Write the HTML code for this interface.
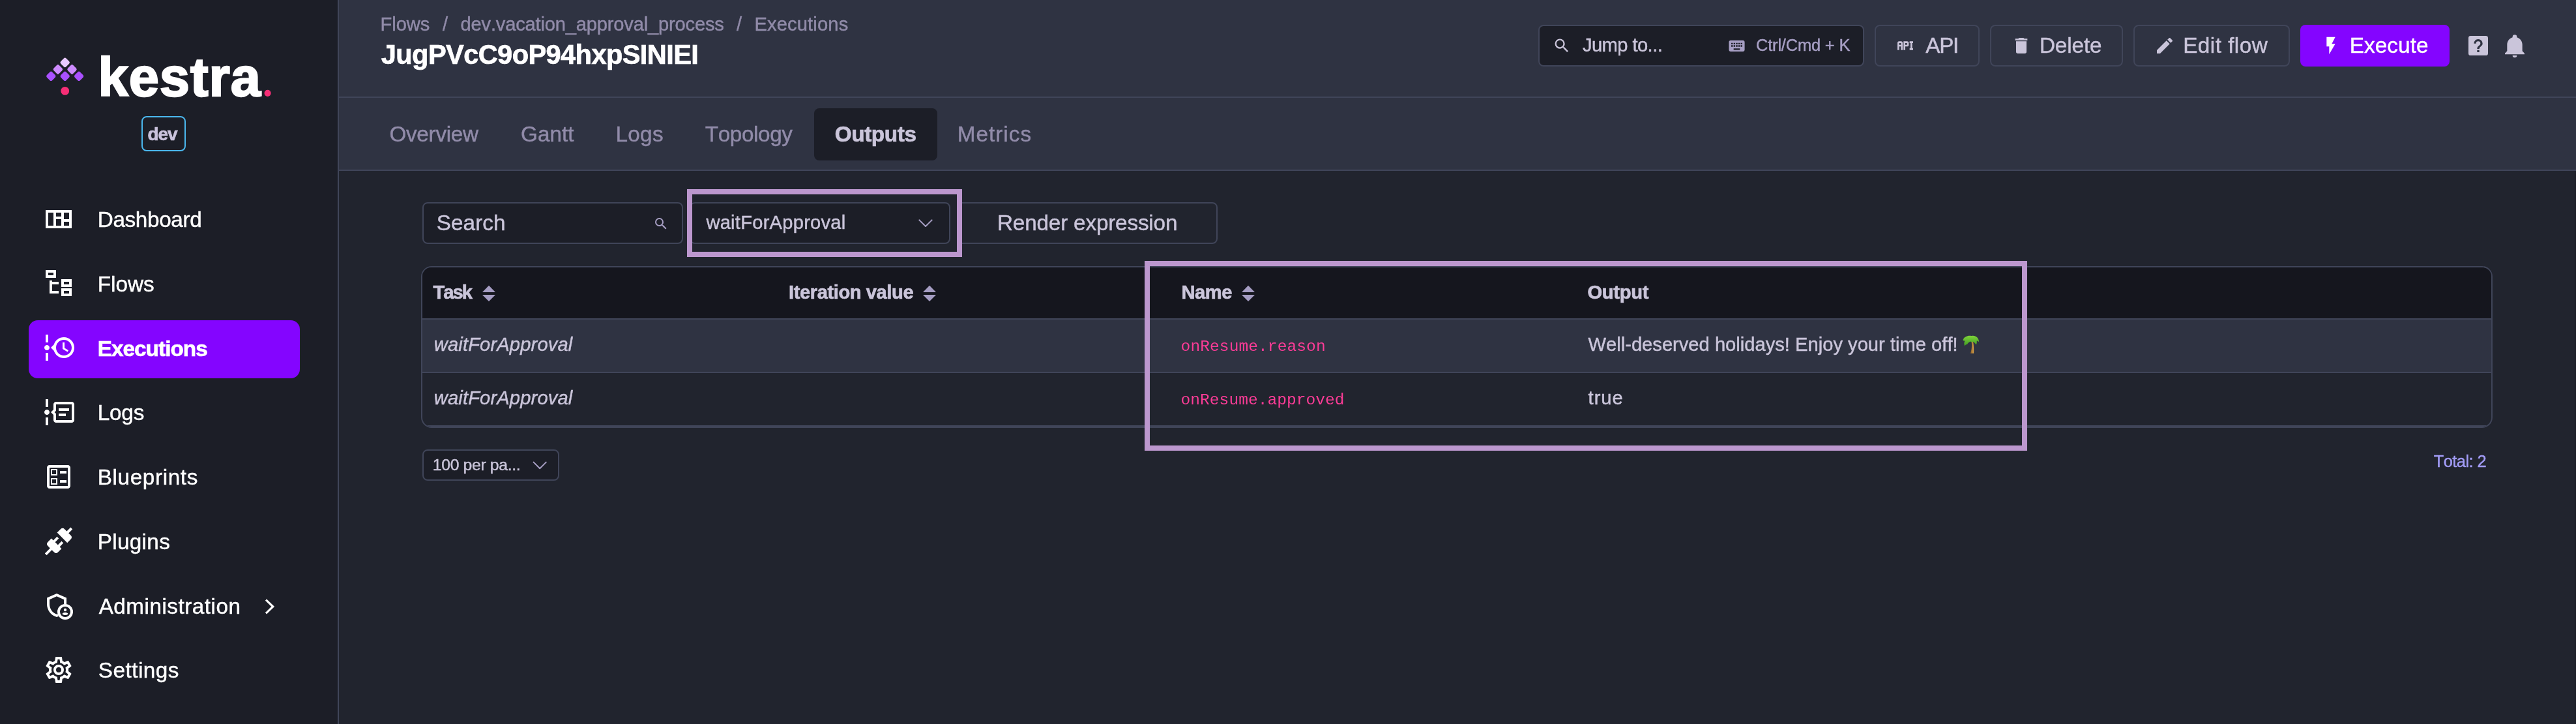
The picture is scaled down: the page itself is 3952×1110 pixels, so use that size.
<!DOCTYPE html>
<html lang="en">
<head>
<meta charset="utf-8">
<title>Executions - Outputs | Kestra</title>
<style>
html,body{margin:0;padding:0;background:#21242e;}
body{width:3952px;height:1110px;overflow:hidden;font-family:"Liberation Sans", sans-serif;}
#app{position:relative;width:3952px;height:1110px;overflow:hidden;background:#21242e;}
.b{position:absolute;box-sizing:border-box;}
.t{position:absolute;white-space:pre;line-height:1;font-kerning:none;}
.i{position:absolute;display:block;overflow:visible;}
.emo{opacity:0;letter-spacing:0;}
.m{font-family:"Liberation Mono", monospace;}
#txt{position:absolute;left:0;top:0;width:3952px;height:1110px;will-change:transform;}
.btn{border:2px solid #404559;border-radius:8px;}
.inp{border:2px solid #404559;border-radius:8px;background:#1c1e27;}

</style>
</head>
<body>
<div id="app">
<!-- sidebar -->
<div class="b" style="left:0px;top:0px;width:520px;height:1110px;background:#1c1e27;border-right:2px solid #404559;"></div>
<svg class="i" style="left:0;top:0" width="520" height="260" viewBox="0 0 520 260"><rect x="93.90" y="90.10" width="11.6" height="11.6" rx="2.6" fill="#e9c9ff" transform="rotate(45 99.7 95.9)"/><rect x="83.10" y="100.60" width="11.6" height="11.6" rx="2.6" fill="#cd8bff" transform="rotate(45 88.9 106.4)"/><rect x="104.70" y="100.60" width="11.6" height="11.6" rx="2.6" fill="#cd8bff" transform="rotate(45 110.5 106.4)"/><rect x="72.50" y="111.00" width="11.6" height="11.6" rx="2.6" fill="#a950ff" transform="rotate(45 78.3 116.8)"/><rect x="93.90" y="111.00" width="11.6" height="11.6" rx="2.6" fill="#a950ff" transform="rotate(45 99.7 116.8)"/><rect x="115.30" y="111.00" width="11.6" height="11.6" rx="2.6" fill="#a950ff" transform="rotate(45 121.1 116.8)"/><circle cx="99.7" cy="139.4" r="6.4" fill="#f62e76"/><circle cx="410.6" cy="142.8" r="5.1" fill="#f62e76"/></svg>
<div class="b" style="left:217px;top:178px;width:68px;height:54px;border:2px solid #4bb8ef;border-radius:8px;"></div>
<div class="b" style="left:44px;top:491px;width:416px;height:89px;background:#8405ff;border-radius:14px;"></div>
<svg class="i" style="left:66px;top:312px" width="48" height="48" viewBox="0 0 24 24"><path fill="#fff" d="M2 5V19H22V5H2M20 12H16V7H20V12M14 10H10V7H14V10M4 7H8V17H4V7M10 17V12H14V17H10M20 17H16V14H20V17Z"/></svg>
<svg class="i" style="left:66px;top:410px" width="48" height="48" viewBox="0 0 24 24"><path fill="#fff" d="M12 13H7V18H12V20H5V10H7V11H12V13M8 4V6H4V4H8M10 2H2V8H10V2M20 11V13H16V11H20M22 9H14V15H22V9M20 18V20H16V18H20M22 16H14V22H22V16Z"/></svg>
<svg class="i" style="left:66px;top:509.1px" width="48" height="48" viewBox="0 0 24 24"><path fill="#fff" d="M4 2V8H2V2H4M2 22H4V16H2V22M5 12C5 13.11 4.11 14 3 14C1.9 14 1 13.11 1 12C1 10.9 1.9 10 3 10C4.11 10 5 10.9 5 12M16 4C20.42 4 24 7.58 24 12C24 16.42 20.42 20 16 20C12.4 20 9.36 17.62 8.35 14.35L6 12L8.35 9.65C9.36 6.38 12.4 4 16 4M16 6C12.69 6 10 8.69 10 12C10 15.31 12.69 18 16 18C19.31 18 22 15.31 22 12C22 8.69 19.31 6 16 6M15 13V8H16.5V12.2L19.5 14L18.82 15.26L15 13Z"/></svg>
<svg class="i" style="left:66px;top:607.9px" width="48" height="48" viewBox="0 0 24 24"><path fill="#fff" d="M5 12C5 13.11 4.11 14 3 14S1 13.11 1 12 1.9 10 3 10 5 10.9 5 12M4 2V8H2V2H4M2 22V16H4V22H2M24 6V18C24 19.11 23.11 20 22 20H10C8.9 20 8 19.11 8 18V14L6 12L8 10V6C8 4.89 8.9 4 10 4H22C23.11 4 24 4.89 24 6M10 6V10.83L8.83 12L10 13.17V18H22V6H10M12 9H20V11H12V9M12 13H17.5V15H12V13Z"/></svg>
<svg class="i" style="left:66px;top:706.8px" width="48" height="48" viewBox="0 0 24 24"><path fill="#fff" d="M13 7.5H18V9.5H13V7.5M13 14.5H18V16.5H13V14.5M19 3C20.1 3 21 3.9 21 5V19C21 20.1 20.1 21 19 21H5C3.9 21 3 20.1 3 19V5C3 3.9 3.9 3 5 3H19M19 19V5H5V19H19M11 6V11H6V6H11M10 10V7H7V10H10M11 13V18H6V13H11M10 17V14H7V17H10Z"/></svg>
<svg class="i" style="left:66px;top:805.9px" width="48" height="48" viewBox="0 0 24 24"><path fill="#fff" d="M21.4 7.5C22.2 8.3 22.2 9.6 21.4 10.3L18.6 13.1L10.8 5.3L13.6 2.5C14.4 1.7 15.7 1.7 16.4 2.5L18.2 4.3L21.2 1.3L22.6 2.7L19.6 5.7L21.4 7.5M15.6 13.3L14.2 11.9L11.4 14.7L9.3 12.6L12.1 9.8L10.7 8.4L7.9 11.2L6.4 9.8L3.6 12.6C2.8 13.4 2.8 14.7 3.6 15.4L5.4 17.2L1.4 21.2L2.8 22.6L6.8 18.6L8.6 20.4C9.4 21.2 10.7 21.2 11.4 20.4L14.2 17.6L12.8 16.2L15.6 13.3Z"/></svg>
<svg class="i" style="left:66px;top:1003px" width="48" height="48" viewBox="0 0 24 24"><path fill="#fff" d="M12,8A4,4 0 0,1 16,12A4,4 0 0,1 12,16A4,4 0 0,1 8,12A4,4 0 0,1 12,8M12,10A2,2 0 0,0 10,12A2,2 0 0,0 12,14A2,2 0 0,0 14,12A2,2 0 0,0 12,10M10,22C9.75,22 9.54,21.82 9.5,21.58L9.13,18.93C8.5,18.68 7.96,18.34 7.44,17.94L4.95,18.95C4.73,19.03 4.46,18.95 4.34,18.73L2.34,15.27C2.21,15.05 2.27,14.78 2.46,14.63L4.57,12.97L4.5,12L4.57,11L2.46,9.37C2.27,9.22 2.21,8.95 2.34,8.73L4.34,5.27C4.46,5.05 4.73,4.96 4.95,5.05L7.44,6.05C7.96,5.66 8.5,5.32 9.13,5.07L9.5,2.42C9.54,2.18 9.75,2 10,2H14C14.25,2 14.46,2.18 14.5,2.42L14.87,5.07C15.5,5.32 16.04,5.66 16.56,6.05L19.05,5.05C19.27,4.96 19.54,5.05 19.66,5.27L21.66,8.73C21.79,8.95 21.73,9.22 21.54,9.37L19.43,11L19.5,12L19.43,13L21.54,14.63C21.73,14.78 21.79,15.05 21.66,15.27L19.66,18.73C19.54,18.95 19.27,19.04 19.05,18.95L16.56,17.95C16.04,18.34 15.5,18.68 14.87,18.93L14.5,21.58C14.46,21.82 14.25,22 14,22H10M11.25,4L10.88,6.61C9.68,6.86 8.62,7.5 7.85,8.39L5.44,7.35L4.69,8.65L6.8,10.2C6.4,11.37 6.4,12.64 6.8,13.8L4.68,15.36L5.43,16.66L7.86,15.62C8.63,16.5 9.68,17.14 10.87,17.38L11.24,20H12.76L13.13,17.39C14.32,17.14 15.37,16.5 16.14,15.62L18.57,16.66L19.32,15.36L17.2,13.81C17.6,12.64 17.6,11.37 17.2,10.2L19.31,8.65L18.56,7.35L16.15,8.39C15.38,7.5 14.32,6.86 13.12,6.62L12.75,4H11.25Z"/></svg>
<svg class="i" style="left:66px;top:904.1px" width="48" height="48" viewBox="0 0 24 24"><path fill="#fff" fill-rule="evenodd" d="M10.5 3L18 6.27V11.18C18 15.72 14.8 19.97 10.5 21C6.2 19.97 3 15.72 3 11.18V6.27ZM10.5 5.18L5 7.58V11.18C5 14.7 7.4 18.05 10.5 18.93C13.6 18.05 16 14.7 16 11.18V7.58Z"/><circle cx="17" cy="17" r="6" fill="#1c1e27"/><circle cx="17" cy="17" r="5" fill="none" stroke="#fff" stroke-width="2"/><circle cx="17" cy="15.5" r="1.1" fill="#fff"/><path fill="#fff" d="M14.7 18.6C14.9 17.9 16.2 17.5 17 17.5S19.1 17.9 19.3 18.6C18.8 19.2 17.9 19.5 17 19.5S15.2 19.2 14.7 18.6Z"/></svg>
<svg class="i" style="left:400px;top:910px" width="30" height="40" viewBox="400 910 30 40"><polyline points="408,919.6 418.8,930 408,940.4" fill="none" stroke="#fff" stroke-width="3.2" stroke-linejoin="miter"/></svg>
<!-- header -->
<div class="b" style="left:520px;top:0px;width:3432px;height:150px;background:#2f3342;border-bottom:2px solid #404559;"></div>
<div class="b" style="left:520px;top:150px;width:3432px;height:112px;background:#2f3342;border-bottom:2px solid #404559;"></div>
<div class="b" style="left:1249px;top:166px;width:189px;height:80px;background:#1c1e27;border-radius:8px;"></div>
<div class="b inp" style="left:2360px;top:38px;width:500px;height:64px;"></div>
<svg class="i" style="left:2382.2px;top:56.3px" width="28" height="28" viewBox="0 0 24 24"><path fill="#cac5da" d="M9.5,3A6.5,6.5 0 0,1 16,9.5C16,11.11 15.41,12.59 14.44,13.73L14.71,14H15.5L20.5,19L19,20.5L14,15.5V14.71L13.73,14.44C12.59,15.41 11.11,16 9.5,16A6.5,6.5 0 0,1 3,9.5A6.5,6.5 0 0,1 9.5,3M9.5,5C7,5 5,7 5,9.5C5,12 7,14 9.5,14C12,14 14,12 14,9.5C14,7 12,5 9.5,5Z"/></svg>
<svg class="i" style="left:2650.4px;top:55.6px" width="29" height="29" viewBox="0 0 24 24"><path fill="#a79fc4" d="M19,10H17V8H19M19,13H17V11H19M16,10H14V8H16M16,13H14V11H16M16,17H8V15H16M7,10H5V8H7M7,13H5V11H7M8,11H10V13H8M8,8H10V10H8M11,11H13V13H11M11,8H13V10H11M20,5H4C2.89,5 2,5.89 2,7V17A2,2 0 0,0 4,19H20A2,2 0 0,0 22,17V7C22,5.89 21.1,5 20,5Z"/></svg>
<div class="b btn" style="left:2876px;top:38px;width:161px;height:64px;"></div>
<svg class="i" style="left:2907.4px;top:54.2px" width="32" height="32" viewBox="0 0 24 24"><path fill="#cac5da" d="M7 7H5A2 2 0 0 0 3 9V17H5V13H7V17H9V9A2 2 0 0 0 7 7M7 11H5V9H7M14 7H10V17H12V13H14A2 2 0 0 0 16 11V9A2 2 0 0 0 14 7M14 11H12V9H14M20 9V15H21V17H17V15H18V9H17V7H21V9Z"/></svg>
<div class="b btn" style="left:3053px;top:38px;width:204px;height:64px;"></div>
<svg class="i" style="left:3085px;top:54.2px" width="32" height="32" viewBox="0 0 24 24"><path fill="#cac5da" d="M19,4H15.5L14.5,3H9.5L8.5,4H5V6H19M6,19A2,2 0 0,0 8,21H16A2,2 0 0,0 18,19V7H6V19Z"/></svg>
<div class="b btn" style="left:3273px;top:38px;width:240px;height:64px;"></div>
<svg class="i" style="left:3304.9px;top:53.9px" width="32" height="32" viewBox="0 0 24 24"><path fill="#cac5da" d="M20.71,7.04C21.1,6.65 21.1,6 20.71,5.63L18.37,3.29C18,2.9 17.35,2.9 16.96,3.29L15.12,5.12L18.87,8.87M3,17.25V21H6.75L17.81,9.93L14.06,6.18L3,17.25Z"/></svg>
<div class="b" style="left:3529px;top:38px;width:229px;height:64px;background:#8405ff;border-radius:8px;"></div>
<svg class="i" style="left:3560.4px;top:54.2px" width="32" height="32" viewBox="0 0 24 24"><path fill="#fff" d="M7,2V13H10V22L17,10H13L17,2H7Z"/></svg>
<svg class="i" style="left:3782px;top:49.8px" width="40" height="40" viewBox="0 0 24 24"><path fill="#cac5da" d="M11,18H13V16H11V18M12,6A4,4 0 0,0 8,10H10A2,2 0 0,1 12,8A2,2 0 0,1 14,10C14,12 11,11.75 11,15H13C13,12.75 16,12.5 16,10A4,4 0 0,0 12,6M5,3H19A2,2 0 0,1 21,5V19A2,2 0 0,1 19,21H5A2,2 0 0,1 3,19V5A2,2 0 0,1 5,3Z"/></svg>
<svg class="i" style="left:3838px;top:49.5px" width="40" height="40" viewBox="0 0 24 24"><path fill="#cac5da" d="M21,19V20H3V19L5,17V11C5,7.9 7.03,5.17 10,4.29C10,4.19 10,4.1 10,4A2,2 0 0,1 12,2A2,2 0 0,1 14,4C14,4.1 14,4.19 14,4.29C16.97,5.17 19,7.9 19,11V17L21,19M14,21A2,2 0 0,1 12,23A2,2 0 0,1 10,21"/></svg>
<!-- content -->
<div class="b inp" style="left:648px;top:310px;width:400px;height:64px;"></div>
<svg class="i" style="left:1002px;top:330.5px" width="24" height="24" viewBox="0 0 24 24"><path fill="#a79fc4" d="M9.5,3A6.5,6.5 0 0,1 16,9.5C16,11.11 15.41,12.59 14.44,13.73L14.71,14H15.5L20.5,19L19,20.5L14,15.5V14.71L13.73,14.44C12.59,15.41 11.11,16 9.5,16A6.5,6.5 0 0,1 3,9.5A6.5,6.5 0 0,1 9.5,3M9.5,5C7,5 5,7 5,9.5C5,12 7,14 9.5,14C12,14 14,12 14,9.5C14,7 12,5 9.5,5Z"/></svg>
<div class="b inp" style="left:1058px;top:310px;width:400px;height:64px;"></div>
<svg class="i" style="left:1400px;top:330px" width="40" height="26" viewBox="1400 330 40 26"><polyline points="1410.3,337.4 1420,347.0 1429.7,337.4" fill="none" stroke="#a79fc4" stroke-width="2" stroke-linecap="round" stroke-linejoin="round"/></svg>
<div class="b btn" style="left:1468px;top:310px;width:400px;height:64px;"></div>
<div class="b" style="left:646px;top:408px;width:3178px;height:248px;border:2px solid #404559;border-radius:16px;overflow:hidden;background:#21242e;"><div class="b" style="left:0;top:0;width:3174px;height:78px;background:#15161e"></div><div class="b" style="left:0;top:78px;width:3174px;height:2px;background:#404559"></div><div class="b" style="left:0;top:80px;width:3174px;height:80px;background:#2f3342"></div><div class="b" style="left:0;top:160px;width:3174px;height:2px;background:#404559"></div><div class="b" style="left:0;top:242px;width:3174px;height:2px;background:#404559"></div></div>
<svg class="i" style="left:738px;top:436px" width="24" height="28" viewBox="0 0 24 28"><path fill="#a59dc3" d="M12 1.7L22 12H2ZM12 26L2 16.1H22Z"/></svg>
<svg class="i" style="left:1414px;top:436px" width="24" height="28" viewBox="0 0 24 28"><path fill="#a59dc3" d="M12 1.7L22 12H2ZM12 26L2 16.1H22Z"/></svg>
<svg class="i" style="left:1903.2px;top:436px" width="24" height="28" viewBox="0 0 24 28"><path fill="#a59dc3" d="M12 1.7L22 12H2ZM12 26L2 16.1H22Z"/></svg>
<div class="b inp" style="left:648px;top:689px;width:210px;height:48px;"></div>
<svg class="i" style="left:810px;top:700px" width="36" height="26" viewBox="810 700 36 26"><polyline points="818.6,708.6 828.2,718.2 837.8,708.6" fill="none" stroke="#a79fc4" stroke-width="2" stroke-linecap="round" stroke-linejoin="round"/></svg>
<div class="b" style="left:3950px;top:262px;width:2px;height:848px;background:#1c1e27;"></div>
<!-- text -->
<div id="txt">
<span class="t" style="left:150.6px;top:76.6px;font-size:83.0px;color:#ffffff;letter-spacing:0.956px;font-weight:700;-webkit-text-stroke:0.7px;-webkit-text-stroke:2.4px #fff">kestra</span>
<span class="t" style="left:226.6px;top:191.8px;font-size:28.0px;color:#c9c2dc;letter-spacing:-1.138px;font-weight:700;-webkit-text-stroke:0.7px">dev</span>
<span class="t" style="left:149.7px;top:320.06px;font-size:33.28px;color:#ffffff;letter-spacing:-0.33px;-webkit-text-stroke:0.45px">Dashboard</span>
<span class="t" style="left:149.7px;top:418.81px;font-size:33.28px;color:#ffffff;letter-spacing:0.016px;-webkit-text-stroke:0.45px">Flows</span>
<span class="t" style="left:149.7px;top:517.56px;font-size:33.28px;color:#ffffff;letter-spacing:-0.941px;font-weight:700;-webkit-text-stroke:0.7px">Executions</span>
<span class="t" style="left:149.7px;top:616.31px;font-size:33.28px;color:#ffffff;letter-spacing:-0.167px;-webkit-text-stroke:0.45px">Logs</span>
<span class="t" style="left:149.7px;top:715.06px;font-size:33.28px;color:#ffffff;letter-spacing:0.634px;-webkit-text-stroke:0.45px">Blueprints</span>
<span class="t" style="left:149.7px;top:813.81px;font-size:33.28px;color:#ffffff;letter-spacing:0.338px;-webkit-text-stroke:0.45px">Plugins</span>
<span class="t" style="left:151.7px;top:912.56px;font-size:33.28px;color:#ffffff;letter-spacing:0.495px;-webkit-text-stroke:0.45px">Administration</span>
<span class="t" style="left:150.7px;top:1011.31px;font-size:33.28px;color:#ffffff;letter-spacing:0.505px;-webkit-text-stroke:0.45px">Settings</span>
<span class="t" style="left:583.5px;top:23.44px;font-size:29.12px;color:#918ba9;letter-spacing:-0.04px;-webkit-text-stroke:0.45px">Flows</span>
<span class="t" style="left:678.9px;top:23.44px;font-size:29.12px;color:#918ba9;letter-spacing:0px;-webkit-text-stroke:0.45px">/</span>
<span class="t" style="left:706.5px;top:23.44px;font-size:29.12px;color:#918ba9;letter-spacing:-0.18px;-webkit-text-stroke:0.45px">dev.vacation_approval_process</span>
<span class="t" style="left:1129.9px;top:23.44px;font-size:29.12px;color:#918ba9;letter-spacing:0px;-webkit-text-stroke:0.45px">/</span>
<span class="t" style="left:1157.4px;top:23.44px;font-size:29.12px;color:#918ba9;letter-spacing:0.163px;-webkit-text-stroke:0.45px">Executions</span>
<span class="t" style="left:584.8px;top:63.0px;font-size:41.6px;color:#ffffff;letter-spacing:-0.612px;font-weight:700;-webkit-text-stroke:0.7px">JugPVcC9oP94hxpSINIEI</span>
<span class="t" style="left:597.4px;top:188.76px;font-size:33.28px;color:#918ba9;letter-spacing:-0.273px;-webkit-text-stroke:0.45px">Overview</span>
<span class="t" style="left:799.0px;top:188.76px;font-size:33.28px;color:#918ba9;letter-spacing:0.045px;-webkit-text-stroke:0.45px">Gantt</span>
<span class="t" style="left:944.5px;top:188.76px;font-size:33.28px;color:#918ba9;letter-spacing:0.299px;-webkit-text-stroke:0.45px">Logs</span>
<span class="t" style="left:1081.8px;top:188.76px;font-size:33.28px;color:#918ba9;letter-spacing:-0.388px;-webkit-text-stroke:0.45px">Topology</span>
<span class="t" style="left:1280.7px;top:188.76px;font-size:33.28px;color:#cac5da;letter-spacing:-0.365px;font-weight:700;-webkit-text-stroke:0.7px">Outputs</span>
<span class="t" style="left:1468.8px;top:188.76px;font-size:33.28px;color:#918ba9;letter-spacing:1.008px;-webkit-text-stroke:0.45px">Metrics</span>
<span class="t" style="left:2427.9px;top:55.34px;font-size:29.12px;color:#cac5da;letter-spacing:-0.547px;-webkit-text-stroke:0.45px">Jump to...</span>
<span class="t" style="left:2694.0px;top:57.16px;font-size:25.48px;color:#a79fc4;letter-spacing:-0.189px;-webkit-text-stroke:0.45px">Ctrl/Cmd + K</span>
<span class="t" style="left:2954.3px;top:52.76px;font-size:33.28px;color:#cac5da;letter-spacing:-1.338px;-webkit-text-stroke:0.45px">API</span>
<span class="t" style="left:3128.9px;top:52.76px;font-size:33.28px;color:#cac5da;letter-spacing:-0.092px;-webkit-text-stroke:0.45px">Delete</span>
<span class="t" style="left:3349.2px;top:52.76px;font-size:33.28px;color:#cac5da;letter-spacing:0.475px;-webkit-text-stroke:0.45px">Edit flow</span>
<span class="t" style="left:3604.7px;top:52.76px;font-size:33.28px;color:#ffffff;letter-spacing:0.1px;-webkit-text-stroke:0.45px">Execute</span>
<span class="t" style="left:669.8px;top:325.16px;font-size:33.28px;color:#cac5da;letter-spacing:0.06px;-webkit-text-stroke:0.45px">Search</span>
<span class="t" style="left:1083.4px;top:327.34px;font-size:29.12px;color:#cac5da;letter-spacing:0.254px;-webkit-text-stroke:0.45px">waitForApproval</span>
<span class="t" style="left:1530.0px;top:324.96px;font-size:33.28px;color:#cac5da;letter-spacing:-0.176px;-webkit-text-stroke:0.45px">Render expression</span>
<span class="t" style="left:664.5px;top:434.44px;font-size:29.12px;color:#cac5da;letter-spacing:-1.987px;font-weight:700;-webkit-text-stroke:0.7px">Task</span>
<span class="t" style="left:1210.0px;top:434.44px;font-size:29.12px;color:#cac5da;letter-spacing:-0.412px;font-weight:700;-webkit-text-stroke:0.7px">Iteration value</span>
<span class="t" style="left:1812.5px;top:434.44px;font-size:29.12px;color:#cac5da;letter-spacing:-0.465px;font-weight:700;-webkit-text-stroke:0.7px">Name</span>
<span class="t" style="left:2435.5px;top:434.44px;font-size:29.12px;color:#cac5da;letter-spacing:-0.296px;font-weight:700;-webkit-text-stroke:0.7px">Output</span>
<span class="t" style="left:665.8px;top:514.34px;font-size:29.12px;color:#cac5da;letter-spacing:0.154px;-webkit-text-stroke:0.45px;font-style:italic">waitForApproval</span>
<span class="t" style="left:665.8px;top:596.34px;font-size:29.12px;color:#cac5da;letter-spacing:0.154px;-webkit-text-stroke:0.45px;font-style:italic">waitForApproval</span>
<span class="t m" style="left:1811.6px;top:520.15px;font-size:24.5px;color:#fd3c97;letter-spacing:0.105px">onResume.reason</span>
<span class="t m" style="left:1811.6px;top:602.15px;font-size:24.5px;color:#fd3c97;letter-spacing:0.054px">onResume.approved</span>
<span class="t" style="left:2436.5px;top:514.34px;font-size:29.12px;color:#cac5da;letter-spacing:0.019px;-webkit-text-stroke:0.45px">Well-deserved holidays! Enjoy your time off!<span class="emo"> 🌴</span></span>
<span class="t" style="left:2436.5px;top:596.34px;font-size:29.12px;color:#cac5da;letter-spacing:1.043px;-webkit-text-stroke:0.45px">true</span>
<span class="t" style="left:663.8px;top:701.02px;font-size:24.75px;color:#cac5da;letter-spacing:-0.35px;-webkit-text-stroke:0.45px">100 per pa...</span>
<span class="t" style="left:3733.7px;top:695.36px;font-size:25.48px;color:#a29cf6;letter-spacing:-0.553px;-webkit-text-stroke:0.45px">Total: 2</span>
</div>
<svg class="i" style="left:3010px;top:512px" width="30" height="32" viewBox="0 0 30 32"><defs><linearGradient id="pg" x1="0" y1="0" x2="0" y2="1"><stop offset="0" stop-color="#7fd43a"/><stop offset="1" stop-color="#3f9a22"/></linearGradient><linearGradient id="pt" x1="0" y1="0" x2="1" y2="0"><stop offset="0" stop-color="#8a5a22"/><stop offset="1" stop-color="#d6a24c"/></linearGradient></defs><path d="M14.2 10.5C15.6 15 15.2 24 13 29.8L18 29.8C18.4 24 18 15 16.7 10.5Z" fill="url(#pt)"/><path d="M1.4 9.6C3 3.6 10 1.8 14.5 3C20 1.5 26 5 26.2 12.6C25 11 23.6 10.5 22.6 10.5C23 12.6 22.8 15 21.5 16.6C20 14 18.6 12.6 16.8 11.8L15.2 13.2L13.2 11.6C11 12.5 9 14 8 16C6.5 15.6 5 17 4.2 18.6C3 16 3 13 4.5 10.5C3.4 10.6 2.4 10.7 1.4 9.6Z" fill="url(#pg)"/></svg>
<div class="b" style="left:1054px;top:290px;width:422px;height:104px;border:8px solid #bc97ce;"></div>
<div class="b" style="left:1756px;top:400px;width:1354px;height:291px;border:8px solid #bc97ce;"></div>
</div>
</body>
</html>
